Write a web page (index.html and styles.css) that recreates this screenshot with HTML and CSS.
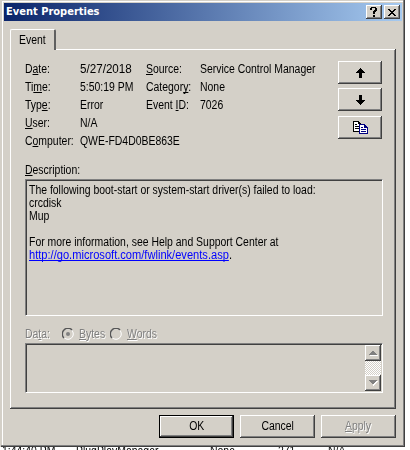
FILE: index.html
```
<!DOCTYPE html>
<html lang="en">
<head>
<meta charset="utf-8">
<title>Event Properties</title>
<link rel="stylesheet" href="styles.css">
</head>
<body>
<main class="window">
  <header class="titlebar">
    <h1>Event Properties</h1>
    <button class="caption" aria-label="Help"><svg width="8" height="10" shape-rendering="crispEdges"><path d="M1 0h5v1h1v3h-1v1h-1v2h-2v-3h1v-1h1v-2h-3v2h-2v-2h1zM3 8h2v2h-2z"/></svg></button>
    <button class="caption" aria-label="Close"><svg width="8" height="7" shape-rendering="crispEdges"><path d="M0 0h2v1h1v1h2v-1h1v-1h2v1h-1v1h-1v1h-1v1h1v1h1v1h1v1h-2v-1h-1v-1h-2v1h-1v1h-2v-1h1v-1h1v-1h1v-1h-1v-1h-1v-1h-1z"/></svg></button>
  </header>
  <div class="tab"><p>Event</p></div>
  <section class="panel">
    <div class="summary">
      <dl class="fields">
        <dt>D<u>a</u>te:</dt><dd class="date">5/27/2018</dd><dt><u>S</u>ource:</dt><dd>Service Control Manager</dd>
        <dt>Ti<u>m</u>e:</dt><dd>5:50:19 PM</dd><dt>Categor<u>y</u>:</dt><dd>None</dd>
        <dt>Typ<u>e</u>:</dt><dd>Error</dd><dt>Event <u>I</u>D:</dt><dd>7026</dd>
        <dt><u>U</u>ser:</dt><dd class="wide">N/A</dd>
        <dt>C<u>o</u>mputer:</dt><dd class="wide">QWE-FD4D0BE863E</dd>
      </dl>
      <div class="nav">
        <button class="btn" aria-label="Previous"><svg width="9" height="10" shape-rendering="crispEdges"><path d="M4 0h1v1h1v1h1v1h1v1h1v1h-3v5h-3v-5h-3v-1h1v-1h1v-1h1v-1h1z"/></svg></button>
        <button class="btn" aria-label="Next"><svg width="9" height="10" shape-rendering="crispEdges"><path d="M3 0h3v5h3v1h-1v1h-1v1h-1v1h-1v1h-1v-1h-1v-1h-1v-1h-1v-1h-1v-1h3z"/></svg></button>
        <button class="btn copy" aria-label="Copy"><svg width="15" height="13" shape-rendering="crispEdges"><path fill="#000" d="M0 0h6v1h1v1h1v9h-8z"/><path fill="#fff" d="M1 1h4v2h2v7h-6z"/><path fill="#000" d="M2 3h2v1h-2zM2 5h4v1h-4zM2 7h4v1h-4z"/><path fill="#000080" d="M6 3h6v1h1v1h1v1h1v7h-9z"/><path fill="#fff" d="M7 4h4v3h3v5h-7z"/><path fill="#000080" d="M8 6h2v1h-2zM8 8h5v1h-5zM8 10h5v1h-5z"/></svg></button>
      </div>
    </div>
    <div class="label"><p><u>D</u>escription:</p></div>
    <div class="box description">
      <p>The following boot-start or system-start driver(s) failed to load:</p>
      <p>crcdisk</p>
      <p>Mup</p>
      <p>&nbsp;</p>
      <p>For more information, see Help and Support Center at</p>
      <p class="link"><a>http://go.microsoft.com/fwlink/events.asp</a>.</p>
    </div>
    <div class="format disabled">
      <p class="data">Da<u>t</u>a:</p>
      <svg class="radio" width="12" height="12"><circle cx="6" cy="6" r="5.3" fill="none" stroke="#fff"/><path d="M2 10A5.3 5.3 0 0 1 10 2" fill="none" stroke="#555" stroke-width="1.5"/><circle cx="6" cy="6" r="2" fill="#808080"/></svg>
      <p class="bytes"><u>B</u>ytes</p>
      <svg class="radio" width="12" height="12"><circle cx="6" cy="6" r="5.3" fill="none" stroke="#fff"/><path d="M2 10A5.3 5.3 0 0 1 10 2" fill="none" stroke="#555" stroke-width="1.5"/></svg>
      <p class="words"><u>W</u>ords</p>
    </div>
    <div class="box bytes-box">
      <div class="scroll">
        <span class="arrow"><svg width="9" height="6" shape-rendering="crispEdges"><path fill="#fff" d="M1 5h8v1h-8z"/><path fill="#808080" d="M4 1h1v1h1v1h1v1h1v1h-8v-1h1v-1h1v-1h1v-1z"/></svg></span>
        <span class="arrow"><svg width="9" height="6" shape-rendering="crispEdges"><path fill="#fff" d="M8 1h1v1h-1v1h-1v1h-1v1h-1v1h-1v-2z"/><path fill="#808080" d="M0 0h8v1h-1v1h-1v1h-1v1h-2v-1h-1v-1h-1v-1h-1z"/></svg></span>
      </div>
    </div>
  </section>
  <footer class="actions">
    <button class="btn default"><span>OK</span></button>
    <button class="btn"><span>Cancel</span></button>
    <button class="btn disabled"><span><u>A</u>pply</span></button>
  </footer>
</main>
<div class="behind"><p>1:44:40 PM</p><p>PlugPlayManager</p><p>None</p><p>271</p><p>N/A</p></div>
</body>
</html>
```
FILE: styles.css
```
* { box-sizing: border-box; }
html, body { margin: 0; height: 450px; overflow: hidden; background: #fff; }
body { font: 12px/13px "Liberation Sans", Arial, sans-serif; color: #000; }
u { text-decoration: underline; text-underline-offset: 1px; text-decoration-thickness: 1px; text-decoration-skip-ink: none; }
p, dl, dd, h1 { margin: 0; white-space: nowrap; }
p, dt, dd { transform: scaleX(.87); transform-origin: 0 0; }
.window { position: relative; z-index: 1; width: 405px; height: 447px; padding: 1px 2px 2px 1px; background: #d4d0c8; border-left: 1px solid #d4d0c8; box-shadow: inset -1px -1px #404040, inset -2px -2px #808080, inset 1px 1px #d4d0c8, inset 2px 2px #fff; }
.titlebar { display: flex; align-items: center; width: 398px; height: 18px; margin: 2px 0 0 2px; padding: 0 2px; background: linear-gradient(90deg, #0a246a, #a6caf0); }
.titlebar h1 { flex: 1; color: #fff; font: bold 11px/18px "DejaVu Sans Condensed", "DejaVu Sans", sans-serif; }
button { font: inherit; padding: 0; border: 0; background: #d4d0c8; color: #000; display: flex; align-items: center; justify-content: center; }
.caption, .btn, .arrow { box-shadow: inset -1px -1px #404040, inset 1px 1px #fff, inset -2px -2px #808080; }
.caption { width: 16px; height: 14px; margin-left: 2px; }
.tab { position: relative; z-index: 1; width: 46px; height: 21px; margin: 8px 0 0 8px; padding: 4px 0 0 8px; background: #d4d0c8; border-left: 1px solid #fff; border-top: 1px solid #fff; border-right: 2px solid #606060; border-radius: 2px 2px 0 0; }
.panel { width: 386px; height: 360px; margin: -1px 0 0 8px; padding: 12px 14px 0 15px; box-shadow: inset -1px -1px #404040, inset 1px 1px #fff, inset -2px -2px #808080; }
.summary { display: flex; height: 102px; }
.fields { display: grid; grid-template-columns: 55px 66px 54px 138px; grid-auto-rows: 18px; margin-top: 2px; }
.fields dt, .fields dd { line-height: 13px; white-space: nowrap; }
.fields .date { transform: scaleX(.97); }
.wide { grid-column: 2 / 5; }
.nav { width: 44px; display: flex; flex-direction: column; gap: 5px; }
.nav .btn { width: 44px; height: 23px; margin-bottom: -1px; flex: none; }
.nav .copy { margin-top: 1px; }
.label { height: 15px; margin-top: 1px; }
.box { width: 358px; border: 1px solid; border-color: #808080 #fff #fff #808080; box-shadow: inset 1px 1px #404040; }
.description { height: 137px; padding: 4px 0 0 3px; }
.description a { color: #00f; text-decoration: underline; text-underline-offset: 1px; text-decoration-skip-ink: none; }
.description .link { transform: scaleX(.925); }
.disabled { color: #808080; text-shadow: 1px 1px #fff; }
.format { display: flex; align-items: center; height: 27px; padding-top: 9px; }
.data { width: 37px; }
.bytes { width: 31px; margin-left: 5px; }
.words { margin-left: 5px; }
.bytes-box { height: 50px; padding: 1px; display: flex; justify-content: flex-end; }
.scroll { width: 16px; display: flex; flex-direction: column; justify-content: space-between; background: repeating-conic-gradient(#fff 0 25%, #d4d0c8 0 50%) 0 0 / 2px 2px; }
.arrow { height: 16px; background-color: #d4d0c8; display: flex; align-items: center; justify-content: center; }
.actions { display: flex; gap: 6px; margin: 6px 0 0 157px; }
.actions .btn { width: 75px; height: 23px; }
.actions span { transform: scaleX(.87); }
.actions .default { border: 1px solid #000; }
.behind { display: grid; grid-template-columns: 74px 134px 68px 50px 70px; height: 13px; margin: -2px 0 0 2px; }
```
